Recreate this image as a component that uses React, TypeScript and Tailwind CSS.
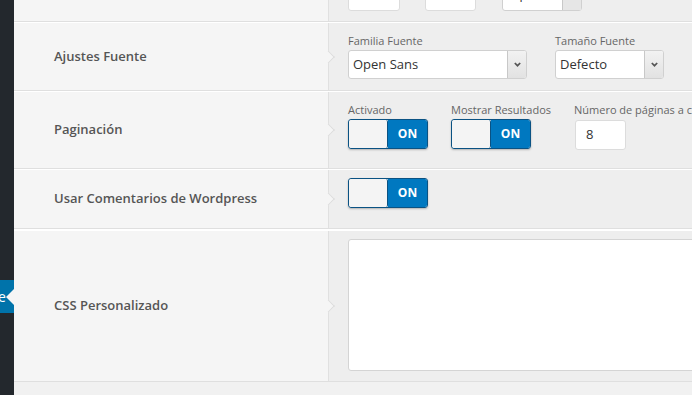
import React from "react";

const font = { fontFamily: '"Open Sans", "Liberation Sans", sans-serif' };

function Notch() {
  return (
    <div className="absolute right-[-5px] top-1/2 -translate-y-1/2 h-[9px] w-[9px] rotate-45 border-t border-r border-[#dcdcdc] bg-[#f5f5f5]" />
  );
}

function Row({
  label,
  children,
  className = "",
  contentClass = "",
  notch = true,
}: {
  label?: string;
  children?: React.ReactNode;
  className?: string;
  contentClass?: string;
  notch?: boolean;
}) {
  return (
    <div className={"flex border-b border-[#dfdfdf] " + className}>
      <div className="relative flex w-[315px] shrink-0 items-center border-r border-[#e0e0e0] bg-[#f5f5f5] pl-[40px]">
        {label && (
          <span className="text-[13px] font-semibold text-[#555]">{label}</span>
        )}
        {notch && <Notch />}
      </div>
      <div className={"min-w-0 flex-1 overflow-hidden bg-[#eeeeee] pl-[19px] " + contentClass}>
        {children}
      </div>
    </div>
  );
}

function Chevron() {
  return (
    <svg width="7" height="5" viewBox="0 0 7 5">
      <path d="M0.8 1 L3.5 3.7 L6.2 1" fill="none" stroke="#555" strokeWidth="1.7" />
    </svg>
  );
}

function Select({ value, width }: { value: string; width: string }) {
  return (
    <div className={"flex h-[29px] items-stretch rounded-[3px] border border-[#d0d0d0] bg-white " + width}>
      <div className="flex flex-1 items-center pl-[4px] text-[13px] text-[#333]">{value}</div>
      <div className="flex w-[19px] items-center justify-center rounded-r-[2px] border-l border-[#c8c8c8] bg-gradient-to-b from-[#f2f2f2] to-[#e2e2e2]">
        <Chevron />
      </div>
    </div>
  );
}

function Toggle() {
  return (
    <div className="flex h-[30px] w-[80px] overflow-hidden rounded-[3px] border border-[#0a5283] shadow-[0_1px_2px_rgba(0,0,0,0.25)]">
      <div className="w-[39px] rounded-[2px] border-r border-[#0a5283] bg-[#f4f4f4]" />
      <div className="flex flex-1 items-center justify-center bg-[#0078c0] text-[12px] font-bold text-white">
        ON
      </div>
    </div>
  );
}

function SmallLabel({ children }: { children: React.ReactNode }) {
  return <div className="h-[17px] text-[11px] leading-[17px] text-[#666] whitespace-nowrap">{children}</div>;
}

export default function App() {
  return (
    <div className="flex h-[395px] w-[692px] overflow-hidden bg-[#f1f1f1]" style={font}>
      {/* sidebar */}
      <div className="relative w-[14px] shrink-0 bg-[#23282d]">
        <div className="absolute left-0 top-[280px] flex h-[33px] w-[14px] items-center overflow-hidden bg-[#0073aa]">
          <span className="ml-[-2px] text-[14px] leading-none text-white">e</span>
          <div className="absolute right-0 top-1/2 h-0 w-0 -translate-y-1/2 border-y-[8px] border-r-[8px] border-y-transparent border-r-[#f5f5f5]" />
        </div>
      </div>

      {/* main */}
      <div className="flex min-w-0 flex-1 flex-col">
        {/* row 1 (cut) */}
        <Row className="h-[22px]" notch={false}>
          <div className="mt-[-20px] flex items-start">
            <div className="h-[31px] w-[52px] rounded-[3px] border border-[#dcdcdc] bg-white" />
            <div className="ml-[25px] h-[31px] w-[51px] rounded-[3px] border border-[#dcdcdc] bg-white" />
            <div className="ml-[26px] flex h-[31px] w-[80px] rounded-[3px] border border-[#d0d0d0] bg-white">
              <div className="flex flex-1 items-end overflow-hidden pb-[9px] pl-[2px] text-[13px] leading-none text-[#333]">Izquierda</div>
              <div className="w-[19px] border-l border-[#c8c8c8] bg-[#e6e6e6]" />
            </div>
          </div>
        </Row>

        {/* Ajustes Fuente */}
        <Row label="Ajustes Fuente" className="h-[69px] border-t border-t-white" contentClass="pt-[9px]">
          <div className="flex gap-[28px]">
            <div>
              <SmallLabel>Familia Fuente</SmallLabel>
              <div className="mt-[1px]">
                <Select value="Open Sans" width="w-[179px]" />
              </div>
            </div>
            <div>
              <SmallLabel>Tamaño Fuente</SmallLabel>
              <div className="mt-[1px]">
                <Select value="Defecto" width="w-[109px]" />
              </div>
            </div>
          </div>
        </Row>

        {/* Paginación */}
        <Row label="Paginación" className="h-[78px] border-t border-t-white" contentClass="pt-[9px]">
          <div className="flex">
            <div className="w-[103px] shrink-0">
              <SmallLabel>Activado</SmallLabel>
              <div className="mt-[1px]">
                <Toggle />
              </div>
            </div>
            <div className="w-[123px] shrink-0">
              <SmallLabel>Mostrar Resultados</SmallLabel>
              <div className="mt-[1px]">
                <Toggle />
              </div>
            </div>
            <div className="shrink-0">
              <SmallLabel>Número de páginas a cargar</SmallLabel>
              <div className="mt-[2px] ml-[1px] flex h-[30px] w-[51px] items-center rounded-[3px] border border-[#dcdcdc] bg-white pl-[10px] text-[13px] text-[#333]">
                8
              </div>
            </div>
          </div>
        </Row>

        {/* Usar Comentarios */}
        <Row label="Usar Comentarios de Wordpress" className="h-[60px] border-t border-t-white" contentClass="pt-[8px]">
          <Toggle />
        </Row>

        {/* CSS */}
        <Row label="CSS Personalizado" className="h-[153px] border-t-[2px] border-t-white" contentClass="pt-[8px]">
          <div className="h-[132px] w-[400px] rounded-[3px] border border-[#d4d4d4] bg-white" />
        </Row>
      </div>
    </div>
  );
}
